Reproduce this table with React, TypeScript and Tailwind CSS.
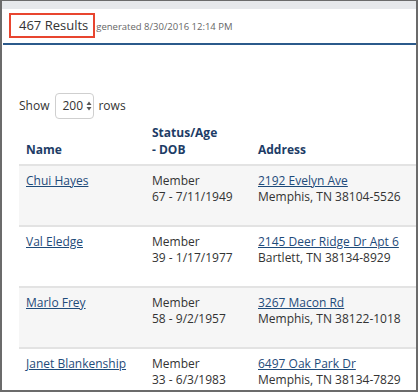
import React from "react";

type Row = {
  name: string;
  status: string;
  ageDob: string;
  street: string;
  city: string;
};

const rows: Row[] = [
  { name: "Chui Hayes", status: "Member", ageDob: "67 - 7/11/1949", street: "2192 Evelyn Ave", city: "Memphis, TN 38104-5526" },
  { name: "Val Eledge", status: "Member", ageDob: "39 - 1/17/1977", street: "2145 Deer Ridge Dr Apt 6", city: "Bartlett, TN 38134-8929" },
  { name: "Marlo Frey", status: "Member", ageDob: "58 - 9/2/1957", street: "3267 Macon Rd", city: "Memphis, TN 38122-1018" },
  { name: "Janet Blankenship", status: "Member", ageDob: "33 - 6/3/1983", street: "6497 Oak Park Dr", city: "Memphis, TN 38134-7829" },
];

function SortArrows() {
  return (
    <svg width="6" height="10" viewBox="0 0 6 10" className="ml-[3px]">
      <path d="M3 0.5 L5.5 4 L0.5 4 Z" fill="#555" />
      <path d="M3 9.5 L5.5 6 L0.5 6 Z" fill="#555" />
    </svg>
  );
}

export default function App() {
  return (
    <div
      className="w-[418px] h-[392px] bg-white border-l-2 border-r-2 border-t border-b-2 border-[#6b6b6b] overflow-hidden text-[#333]"
      style={{ fontFamily: '"Open Sans", "Liberation Sans", sans-serif' }}
    >
      <div className="h-[8px] bg-[#e6e8eb]" />

      <div className="flex items-center pl-[7px] mt-[4px]">
        <div className="h-[25px] border-2 border-[#e8452f] flex items-center pl-[8px] pr-[5px]">
          <span className="text-[13px] leading-none text-[#333]">467 Results</span>
        </div>
        <span className="ml-[1px] text-[9.5px] text-[#666] leading-none mt-[2px]">generated 8/30/2016 12:14 PM</span>
      </div>

      <div className="mt-[5px] ml-[1px] h-[2px] bg-[#2b5a8b]" />

      <div className="pl-[17px] mt-[48px] flex items-center text-[12px]">
        <span>Show</span>
        <div className="ml-[6px] w-[39px] h-[26px] border border-[#cfcfcf] rounded-[4px] flex items-center pl-[6px]">
          <span>200</span>
          <SortArrows />
        </div>
        <span className="ml-[4px]">rows</span>
      </div>

      <div className="ml-[17px] mt-[5px] text-[12px]">
        <div className="grid grid-cols-[126px_106px_1fr] items-end pb-[6px] font-bold text-[#1d3c66] leading-[17px]">
          <div className="pl-[7px]">Name</div>
          <div className="pl-[7px]">
            Status/Age
            <br />- DOB
          </div>
          <div className="pl-[7px]">Address</div>
        </div>

        {rows.map((r, i) => (
          <div
            key={r.name}
            className={`grid grid-cols-[126px_106px_1fr] h-[61px] border-t-2 border-[#e3e3e3] pt-[7px] leading-[16px] ${
              i % 2 === 0 ? "bg-[#f6f6f6]" : "bg-white"
            }`}
          >
            <div className="pl-[7px]">
              <a href="#" className="text-[#1f4b7a] underline">
                {r.name}
              </a>
            </div>
            <div className="pl-[7px]">
              <div>{r.status}</div>
              <div>{r.ageDob}</div>
            </div>
            <div className="pl-[7px] whitespace-nowrap">
              <a href="#" className="text-[#1f4b7a] underline">
                {r.street}
              </a>
              <div>{r.city}</div>
            </div>
          </div>
        ))}
      </div>
    </div>
  );
}
